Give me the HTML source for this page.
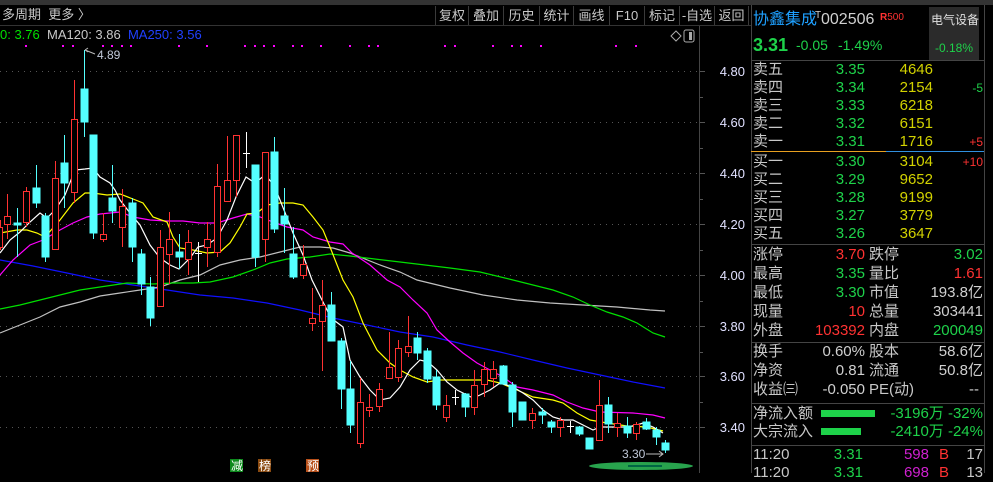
<!DOCTYPE html>
<html><head><meta charset="utf-8">
<style>
*{margin:0;padding:0;box-sizing:border-box}
body{width:993px;height:473px;background:#000;overflow:hidden;position:relative;font-family:"Liberation Sans","Noto Sans CJK SC",sans-serif;color:#c8c8c8}
.a{position:absolute;white-space:nowrap;line-height:1}
.btn{position:absolute;top:6px;height:19px;border-left:1px solid #3a3a3a;font-size:13px;line-height:19px;text-align:center;color:#c8c8c8}
.r{text-align:right}
.g{color:#1ed24a}.rd{color:#ff3232}.y{color:#d2d200}.w{color:#d0d0d0}
.row{position:absolute;left:753px;width:231px;height:18px;font-size:15px;line-height:18px}
.row span{position:absolute;top:0}
</style></head><body>
<div class="a" style="left:0;top:0;width:993px;height:5px;background:#333"></div>
<div class="a" style="left:0;top:25px;width:751px;height:1px;background:#333"></div>
<div class="a" style="left:2px;top:8px;font-size:13px;color:#c8c8c8">多周期&nbsp; 更多 〉</div>
<div class="btn" style="left:435px;width:33px">复权</div>
<div class="btn" style="left:468px;width:35px">叠加</div>
<div class="btn" style="left:503px;width:36px">历史</div>
<div class="btn" style="left:539px;width:34px">统计</div>
<div class="btn" style="left:573px;width:36px">画线</div>
<div class="btn" style="left:609px;width:35px">F10</div>
<div class="btn" style="left:644px;width:35px">标记</div>
<div class="btn" style="left:679px;width:35px">-自选</div>
<div class="btn" style="left:714px;width:35px;border-right:1px solid #3a3a3a">返回</div>
<div class="a" style="left:0;top:28px;font-size:13px"><span style="color:#00e000">0: 3.76</span>&nbsp; <span style="color:#c8c8c8">MA120: 3.86</span>&nbsp; <span style="color:#2040ff">MA250: 3.56</span></div>

<svg class="a" style="left:0;top:0" width="751" height="473" viewBox="0 0 751 473">
<g stroke="#555" stroke-dasharray="1,5" stroke-width="1">
<line x1="0" y1="71.5" x2="700" y2="71.5"/><line x1="0" y1="122.5" x2="700" y2="122.5"/><line x1="0" y1="173.5" x2="700" y2="173.5"/><line x1="0" y1="224.5" x2="700" y2="224.5"/><line x1="0" y1="275.5" x2="700" y2="275.5"/><line x1="0" y1="326.5" x2="700" y2="326.5"/><line x1="0" y1="376.5" x2="700" y2="376.5"/><line x1="0" y1="427.5" x2="700" y2="427.5"/>
</g>
<line x1="699.5" y1="26" x2="699.5" y2="473" stroke="#444"/>
<g stroke="#555"><line x1="700" y1="71.5" x2="705" y2="71.5"/><line x1="700" y1="97.5" x2="703" y2="97.5"/><line x1="700" y1="122.5" x2="705" y2="122.5"/><line x1="700" y1="148.5" x2="703" y2="148.5"/><line x1="700" y1="173.5" x2="705" y2="173.5"/><line x1="700" y1="199.5" x2="703" y2="199.5"/><line x1="700" y1="224.5" x2="705" y2="224.5"/><line x1="700" y1="250.5" x2="703" y2="250.5"/><line x1="700" y1="275.5" x2="705" y2="275.5"/><line x1="700" y1="301.5" x2="703" y2="301.5"/><line x1="700" y1="326.5" x2="705" y2="326.5"/><line x1="700" y1="352.5" x2="703" y2="352.5"/><line x1="700" y1="376.5" x2="705" y2="376.5"/><line x1="700" y1="402.5" x2="703" y2="402.5"/><line x1="700" y1="427.5" x2="705" y2="427.5"/></g>
<g fill="#e0e0ff" font-size="13" font-family="Liberation Sans,sans-serif" text-anchor="end">
<text x="745" y="76">4.80</text><text x="745" y="127">4.60</text><text x="745" y="178">4.40</text><text x="745" y="229">4.20</text><text x="745" y="280">4.00</text><text x="745" y="331">3.80</text><text x="745" y="381">3.60</text><text x="745" y="432">3.40</text>
</g>
<g fill="#ff00ff">
<rect x="25" y="45" width="2" height="2"/><rect x="62" y="45" width="2" height="2"/><rect x="72" y="45" width="2" height="2"/><rect x="102" y="45" width="2" height="2"/><rect x="111" y="45" width="2" height="2"/><rect x="121" y="45" width="2" height="2"/><rect x="130" y="45" width="2" height="2"/><rect x="178" y="45" width="2" height="2"/><rect x="206" y="45" width="2" height="2"/><rect x="244" y="45" width="2" height="2"/><rect x="254" y="45" width="2" height="2"/><rect x="263" y="45" width="2" height="2"/><rect x="273" y="45" width="2" height="2"/><rect x="292" y="45" width="2" height="2"/><rect x="301" y="45" width="2" height="2"/><rect x="320" y="45" width="2" height="2"/><rect x="349" y="45" width="2" height="2"/><rect x="368" y="45" width="2" height="2"/><rect x="377" y="45" width="2" height="2"/><rect x="444" y="45" width="2" height="2"/><rect x="454" y="45" width="2" height="2"/><rect x="492" y="45" width="2" height="2"/><rect x="511" y="45" width="2" height="2"/><rect x="520" y="45" width="2" height="2"/><rect x="540" y="45" width="2" height="2"/><rect x="615" y="45" width="2" height="2"/><rect x="635" y="45" width="2" height="2"/>
</g>
<path d="M671 36 l5 -5 l5 5 l-5 5z" fill="none" stroke="#aaa"/>
<rect x="684" y="30" width="10" height="12" rx="2" fill="none" stroke="#aaa"/><rect x="689" y="32" width="3" height="8" fill="#aaa"/>
<g fill="none" stroke-width="1.2">
<polyline stroke="#1010ff" points="0,260 33,266 67,273 100,280 133,285 167,290 200,295 233,298 267,303 300,310 333,318 367,325 400,332 433,337 467,345 500,352 533,360 567,368 600,375 633,382 665,388"/>
<polyline stroke="#c0c0c0" points="0,333 20,325 40,317 60,307 80,302 100,296 120,293 140,290 160,287 180,280 200,275 220,265 240,260 260,257 280,252 300,247 320,247 333,248 350,253 380,265 400,272 417,280 450,288 483,295 517,300 550,303 583,305 617,307 650,310 665,311"/>
<polyline stroke="#00e000" points="0,309 20,305 40,300 60,295 80,290 100,287 127,283 153,284 173,283 193,283 210,282 233,277 253,270 270,263 287,259 310,257 330,254 350,256 400,262 450,268 480,272 513,280 533,285 553,290 573,297 590,305 607,312 623,317 637,323 653,333 665,337"/>
<polyline stroke="#ff00ff" points="0,275 13,260 30,245 43,240 60,230 73,223 87,217 100,214 120,212 133,217 150,220 167,221 183,221 200,223 217,223 233,218 247,214 260,217 273,222 287,227 303,230 313,237 330,242 343,244 352,253 370,265 387,280 400,287 413,300 427,313 437,330 450,342 463,353 477,363 490,370 503,377 517,387 533,390 553,395 567,402 583,408 600,412 633,413 653,415 665,418"/>
<polyline stroke="#ffff00" points="0,233 17,230 27,230 37,233 45,237 60,220 73,203 85,193 93,193 107,195 120,194 133,199 143,203 153,217 167,222 173,237 180,248 193,250 207,253 220,252 230,243 240,227 247,214 257,213 267,205 280,203 293,203 303,205 313,217 323,230 330,247 343,280 353,297 363,323 377,350 390,363 400,370 413,377 427,382 440,380 467,380 487,380 500,383 517,390 533,397 553,400 563,403 577,413 590,420 607,423 627,426 647,427 663,431"/>
<polyline stroke="#ffffff" points="0,253 10,240 20,232 30,222 40,213 47,218 55,210 65,195 75,170 85,169 93,168 100,177 110,183 115,190 120,200 130,213 140,225 150,245 160,258 170,265 179,269 190,258 198,247 207,245 217,238 227,220 236,197 246,177 255,183 265,175 274,185 284,210 293,233 303,255 312,280 322,300 331,318 343,327 350,360 360,377 370,390 380,400 390,398 400,387 410,370 420,360 428,362 437,370 447,382 457,390 467,395 473,398 480,395 490,390 500,383 513,387 523,393 533,400 543,410 553,417 563,420 573,420 587,427 593,430 600,427 613,427 627,427 637,425 643,423 653,427 663,433"/>
</g>
<g id="c" stroke-width="1">
<g stroke="#54ffff" fill="#54ffff">
<line x1="17.5" y1="208" x2="17.5" y2="257"/><rect x="14" y="223" width="7" height="2"/>
<line x1="36.5" y1="165" x2="36.5" y2="208"/><rect x="33" y="188" width="7" height="15"/>
<line x1="45.5" y1="213" x2="45.5" y2="262"/><rect x="42" y="216" width="7" height="41"/>
<line x1="64.5" y1="135" x2="64.5" y2="208"/><rect x="61" y="163" width="7" height="20"/>
<line x1="84.5" y1="50" x2="84.5" y2="137"/><rect x="81" y="89" width="7" height="33"/>
<line x1="93.5" y1="135" x2="93.5" y2="239"/><rect x="90" y="135" width="7" height="98"/>
<line x1="112.5" y1="165" x2="112.5" y2="223"/><rect x="109" y="198" width="7" height="13"/>
<line x1="132.5" y1="198" x2="132.5" y2="262"/><rect x="129" y="203" width="7" height="44"/>
<line x1="141.5" y1="249" x2="141.5" y2="295"/><rect x="138" y="254" width="7" height="30"/>
<line x1="150.5" y1="277" x2="150.5" y2="326"/><rect x="147" y="287" width="7" height="31"/>
<line x1="179.5" y1="234" x2="179.5" y2="269"/><rect x="176" y="252" width="7" height="5"/>
<line x1="255.5" y1="165" x2="255.5" y2="267"/><rect x="252" y="165" width="7" height="92"/>
<line x1="274.5" y1="137" x2="274.5" y2="233"/><rect x="271" y="152" width="7" height="77"/>
<line x1="284.5" y1="188" x2="284.5" y2="253"/><rect x="281" y="216" width="7" height="8"/>
<line x1="293.5" y1="227" x2="293.5" y2="279"/><rect x="290" y="254" width="7" height="23"/>
<line x1="331.5" y1="292" x2="331.5" y2="341"/><rect x="328" y="305" width="7" height="36"/>
<line x1="341.5" y1="338" x2="341.5" y2="409"/><rect x="338" y="341" width="7" height="48"/>
<line x1="350.5" y1="361" x2="350.5" y2="433"/><rect x="347" y="389" width="7" height="36"/>
<line x1="417.5" y1="332" x2="417.5" y2="360"/><rect x="414" y="338" width="7" height="15"/>
<line x1="427.5" y1="348" x2="427.5" y2="383"/><rect x="424" y="351" width="7" height="28"/>
<line x1="436.5" y1="370" x2="436.5" y2="410"/><rect x="433" y="377" width="7" height="28"/>
<line x1="465.5" y1="393" x2="465.5" y2="417"/><rect x="462" y="394" width="7" height="13"/>
<line x1="503.5" y1="365" x2="503.5" y2="385"/><rect x="500" y="366" width="7" height="18"/>
<line x1="512.5" y1="382" x2="512.5" y2="427"/><rect x="509" y="385" width="7" height="27"/>
<rect x="519" y="402" width="7" height="18"/>
<line x1="542.5" y1="408" x2="542.5" y2="424"/><rect x="539" y="412" width="7" height="3"/>
<line x1="551.5" y1="420" x2="551.5" y2="433"/><rect x="548" y="422" width="7" height="5"/>
<line x1="579.5" y1="426" x2="579.5" y2="436"/><rect x="576" y="427" width="7" height="7"/>
<rect x="586" y="438" width="7" height="11"/>
<line x1="608.5" y1="397" x2="608.5" y2="433"/><rect x="605" y="405" width="7" height="19"/>
<line x1="627.5" y1="417" x2="627.5" y2="438"/><rect x="624" y="426" width="7" height="7"/>
<line x1="646.5" y1="418" x2="646.5" y2="430"/><rect x="643" y="422" width="7" height="7"/>
<line x1="656.5" y1="427" x2="656.5" y2="445"/><rect x="653" y="430" width="7" height="7"/>
<line x1="665.5" y1="440" x2="665.5" y2="453"/><rect x="662" y="443" width="7" height="7"/>
</g>
<g stroke="#ff3232" fill="#000">
<line x1="0.5" y1="220" x2="0.5" y2="250"/><rect x="-3.5" y="227.5" width="6" height="20"/>
<line x1="7.5" y1="194" x2="7.5" y2="239"/><rect x="4.5" y="216.5" width="6" height="8"/>
<line x1="26.5" y1="187" x2="26.5" y2="227"/><rect x="23.5" y="191.5" width="6" height="31"/>
<line x1="55.5" y1="161" x2="55.5" y2="249"/><rect x="52.5" y="178.5" width="6" height="71"/>
<line x1="74.5" y1="80" x2="74.5" y2="203"/><rect x="71.5" y="119.5" width="6" height="73"/>
<line x1="103.5" y1="213" x2="103.5" y2="242"/><rect x="100.5" y="234.5" width="6" height="5"/>
<line x1="122.5" y1="189" x2="122.5" y2="247"/><rect x="119.5" y="206.5" width="6" height="21"/>
<line x1="160.5" y1="230" x2="160.5" y2="306"/><rect x="157.5" y="247.5" width="6" height="59"/>
<line x1="169.5" y1="212" x2="169.5" y2="284"/><rect x="166.5" y="239.5" width="6" height="15"/>
<line x1="188.5" y1="230" x2="188.5" y2="275"/><rect x="185.5" y="242.5" width="6" height="17"/>
<line x1="207.5" y1="222" x2="207.5" y2="267"/><rect x="204.5" y="239.5" width="6" height="8"/>
<line x1="217.5" y1="164" x2="217.5" y2="257"/><rect x="214.5" y="186.5" width="6" height="66"/>
<line x1="227.5" y1="136" x2="227.5" y2="201"/><rect x="224.5" y="180.5" width="6" height="21"/>
<line x1="236.5" y1="135" x2="236.5" y2="197"/><rect x="233.5" y="135.5" width="6" height="45"/>
<line x1="265.5" y1="152" x2="265.5" y2="262"/><rect x="262.5" y="152.5" width="6" height="87"/>
<line x1="303.5" y1="245" x2="303.5" y2="279"/><rect x="300.5" y="264.5" width="6" height="11"/>
<line x1="312.5" y1="288" x2="312.5" y2="331"/><rect x="309.5" y="318.5" width="6" height="5"/>
<line x1="322.5" y1="280" x2="322.5" y2="371"/><rect x="319.5" y="305.5" width="6" height="16"/>
<line x1="360.5" y1="378" x2="360.5" y2="448"/><rect x="357.5" y="402.5" width="6" height="41"/>
<line x1="369.5" y1="394" x2="369.5" y2="417"/><rect x="366.5" y="407.5" width="6" height="3"/>
<line x1="379.5" y1="383" x2="379.5" y2="412"/><rect x="376.5" y="389.5" width="6" height="17"/>
<line x1="389.5" y1="332" x2="389.5" y2="378"/><rect x="386.5" y="367.5" width="6" height="11"/>
<line x1="398.5" y1="340" x2="398.5" y2="382"/><rect x="395.5" y="348.5" width="6" height="29"/>
<line x1="408.5" y1="316" x2="408.5" y2="357"/><rect x="405.5" y="346.5" width="6" height="6"/>
<line x1="446.5" y1="395" x2="446.5" y2="422"/><rect x="443.5" y="405.5" width="6" height="12"/>
<line x1="474.5" y1="370" x2="474.5" y2="415"/><rect x="471.5" y="385.5" width="6" height="22"/>
<line x1="484.5" y1="362" x2="484.5" y2="397"/><rect x="481.5" y="369.5" width="6" height="15"/>
<line x1="493.5" y1="361" x2="493.5" y2="387"/><rect x="490.5" y="369.5" width="6" height="9"/>
<line x1="532.5" y1="408" x2="532.5" y2="429"/><rect x="529.5" y="413.5" width="6" height="7"/>
<line x1="560.5" y1="417" x2="560.5" y2="437"/><rect x="557.5" y="420.5" width="6" height="7"/>
<line x1="599.5" y1="380" x2="599.5" y2="440"/><rect x="596.5" y="405.5" width="6" height="35"/>
<line x1="617.5" y1="413" x2="617.5" y2="437"/><rect x="614.5" y="423.5" width="6" height="4"/>
<line x1="636.5" y1="422" x2="636.5" y2="440"/><rect x="633.5" y="424.5" width="6" height="9"/>
</g>
<g stroke="#fff">
<line x1="198.5" y1="242" x2="198.5" y2="282"/><line x1="195" y1="253.5" x2="202" y2="253.5"/>
<line x1="246.5" y1="132" x2="246.5" y2="168"/><line x1="243" y1="153.5" x2="250" y2="153.5"/>
<line x1="455.5" y1="390" x2="455.5" y2="405"/><line x1="452" y1="397.5" x2="459" y2="397.5"/>
<line x1="570.5" y1="421" x2="570.5" y2="433"/><line x1="567" y1="426.5" x2="574" y2="426.5"/>
</g>
</g>
<path d="M85 50 l3 -2 M85 50 l3 2 M85 50 l10 4" stroke="#bbb" fill="none"/>
<text x="97" y="59" fill="#c0c8d8" font-size="12" font-family="Liberation Sans,sans-serif">4.89</text>
<text x="622" y="458" fill="#c0c8d8" font-size="12" font-family="Liberation Sans,sans-serif">3.30</text>
<path d="M646 454 h17 M659 451 l4 3 l-4 3" stroke="#bbb" fill="none"/>
<ellipse cx="641" cy="466" rx="52" ry="4" fill="#2fc05a" opacity="0.85"/>
<path d="M628 466 h34" stroke="#064" stroke-width="2"/>
<rect x="230" y="459" width="13" height="13" fill="#0c8a1c"/><text x="231" y="470" fill="#fff" font-size="12" font-family="Noto Sans CJK SC,sans-serif">减</text>
<rect x="258" y="459" width="13" height="13" fill="#8a4a10"/><text x="259" y="470" fill="#fff" font-size="12" font-family="Noto Sans CJK SC,sans-serif">榜</text>
<rect x="306" y="459" width="13" height="13" fill="#b8501a"/><text x="307" y="470" fill="#fff" font-size="12" font-family="Noto Sans CJK SC,sans-serif">预</text>
</svg>

<!-- right panel -->
<div class="a" style="left:751px;top:5px;width:1px;height:468px;background:#444"></div>
<div class="a" style="left:984px;top:5px;width:1px;height:468px;background:#444"></div>
<div class="a" style="left:751px;top:60px;width:234px;height:1px;background:#444"></div>
<div class="a" style="left:753px;top:12px;font-size:16px;color:#1ea0ff">协鑫集成</div>
<div class="a" style="left:815px;top:11px;font-size:10px;color:#d0d0d0">T</div>
<div class="a" style="left:821px;top:12px;font-size:16px;color:#d0d0d0">002506</div>
<div class="a" style="left:880px;top:13px;font-size:10px;color:#ff3232"><b>R</b>500</div>
<div class="a" style="left:929px;top:7px;width:50px;height:53px;background:#2b2b2b"></div>
<div class="a" style="left:931px;top:14px;font-size:12px;color:#e0e0e0">电气设备</div>
<div class="a" style="left:935px;top:42px;font-size:12px;color:#1ed24a">-0.18%</div>
<div class="a g" style="left:753px;top:36px;font-size:18px;font-weight:bold">3.31</div>
<div class="a g" style="left:796px;top:38px;font-size:14px">-0.05</div>
<div class="a g" style="left:838px;top:38px;font-size:14px">-1.49%</div>

<div class="row" style="top:61px"><span style="left:0">卖五</span><span class="g r" style="right:119px">3.35</span><span class="y r" style="right:51px">4646</span></div>
<div class="row" style="top:79px"><span style="left:0">卖四</span><span class="g r" style="right:119px">3.34</span><span class="y r" style="right:51px">2154</span><span class="g r" style="right:1px;font-size:12px">-5</span></div>
<div class="row" style="top:97px"><span style="left:0">卖三</span><span class="g r" style="right:119px">3.33</span><span class="y r" style="right:51px">6218</span></div>
<div class="row" style="top:115px"><span style="left:0">卖二</span><span class="g r" style="right:119px">3.32</span><span class="y r" style="right:51px">6151</span></div>
<div class="row" style="top:133px"><span style="left:0">卖一</span><span class="g r" style="right:119px">3.31</span><span class="y r" style="right:51px">1716</span><span class="rd r" style="right:1px;font-size:12px">+5</span></div>
<div class="a" style="left:751px;top:151px;width:135px;height:1px;background:#e8a020"></div>
<div class="a" style="left:886px;top:151px;width:98px;height:1px;background:#3090e0"></div>
<div class="row" style="top:153px"><span style="left:0">买一</span><span class="g r" style="right:119px">3.30</span><span class="y r" style="right:51px">3104</span><span class="rd r" style="right:1px;font-size:12px">+10</span></div>
<div class="row" style="top:171px"><span style="left:0">买二</span><span class="g r" style="right:119px">3.29</span><span class="y r" style="right:51px">9652</span></div>
<div class="row" style="top:189px"><span style="left:0">买三</span><span class="g r" style="right:119px">3.28</span><span class="y r" style="right:51px">9199</span></div>
<div class="row" style="top:207px"><span style="left:0">买四</span><span class="g r" style="right:119px">3.27</span><span class="y r" style="right:51px">3779</span></div>
<div class="row" style="top:225px"><span style="left:0">买五</span><span class="g r" style="right:119px">3.26</span><span class="y r" style="right:51px">3647</span></div>
<div class="a" style="left:751px;top:244px;width:234px;height:1px;background:#444"></div>

<div class="row" style="top:246px"><span style="left:0">涨停</span><span class="rd r" style="right:119px">3.70</span><span style="left:116px">跌停</span><span class="g r" style="right:1px">3.02</span></div>
<div class="row" style="top:265px"><span style="left:0">最高</span><span class="g r" style="right:119px">3.35</span><span style="left:116px">量比</span><span class="rd r" style="right:1px">1.61</span></div>
<div class="row" style="top:284px"><span style="left:0">最低</span><span class="g r" style="right:119px">3.30</span><span style="left:116px">市值</span><span class="w r" style="right:1px">193.8亿</span></div>
<div class="row" style="top:303px"><span style="left:0">现量</span><span class="rd r" style="right:119px">10</span><span style="left:116px">总量</span><span class="w r" style="right:1px">303441</span></div>
<div class="row" style="top:322px"><span style="left:0">外盘</span><span class="rd r" style="right:119px">103392</span><span style="left:116px">内盘</span><span class="g r" style="right:1px">200049</span></div>
<div class="a" style="left:751px;top:342px;width:234px;height:1px;background:#444"></div>
<div class="row" style="top:343px"><span style="left:0">换手</span><span class="w r" style="right:119px">0.60%</span><span style="left:116px">股本</span><span class="w r" style="right:1px">58.6亿</span></div>
<div class="row" style="top:362px"><span style="left:0">净资</span><span class="w r" style="right:119px">0.81</span><span style="left:116px">流通</span><span class="w r" style="right:1px">50.8亿</span></div>
<div class="row" style="top:381px"><span style="left:0">收益㈢</span><span class="w r" style="right:119px">-0.050</span><span style="left:116px">PE(动)</span><span class="w r" style="right:5px">--</span></div>
<div class="a" style="left:751px;top:403px;width:234px;height:1px;background:#444"></div>
<div class="row" style="top:405px"><span style="left:0">净流入额</span><span style="left:68px;top:5px;width:54px;height:7px;background:#1ed24a"></span><span class="g r" style="right:1px">-3196万 -32%</span></div>
<div class="row" style="top:423px"><span style="left:0">大宗流入</span><span style="left:68px;top:5px;width:40px;height:7px;background:#1ed24a"></span><span class="g r" style="right:1px">-2410万 -24%</span></div>
<div class="a" style="left:751px;top:445px;width:234px;height:1px;background:#444"></div>
<div class="row" style="top:446px"><span style="left:0">11:20</span><span class="g r" style="right:121px">3.31</span><span class="r" style="right:55px;color:#d020d0">598</span><span class="rd" style="left:186px">B</span><span class="r" style="right:1px">17</span></div>
<div class="row" style="top:464px"><span style="left:0">11:20</span><span class="g r" style="right:121px">3.31</span><span class="r" style="right:55px;color:#d020d0">698</span><span class="rd" style="left:186px">B</span><span class="r" style="right:1px">13</span></div>
</body></html>
